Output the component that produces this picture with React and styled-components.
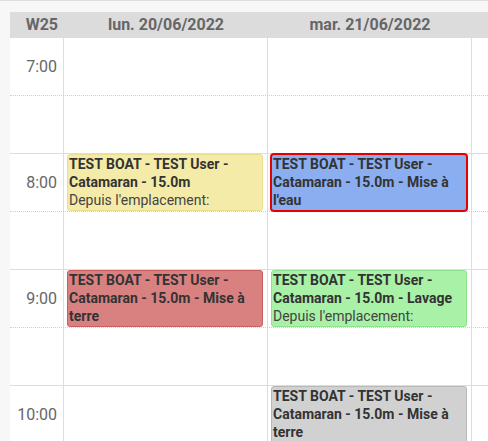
import React from 'react';
import styled, { createGlobalStyle, css } from 'styled-components';

const GlobalStyle = createGlobalStyle`
  html, body {
    margin: 0;
    padding: 0;
    overflow: hidden;
    background: #f7f7f7;
    font-family: Roboto, 'Liberation Sans', sans-serif;
  }
`;

const week = 'W25';
// third column is only partly in view, its heading sits outside the frame
const days = ['lun. 20/06/2022', 'mar. 21/06/2022', ''];
const hours = ['7:00', '8:00', '9:00', '10:00'];

const TITLE = 'TEST BOAT - TEST User - Catamaran - 15.0m';

const events = [
  { day: 0, hour: 1, kind: 'yellow', title: TITLE, detail: "Depuis l'emplacement:" },
  { day: 1, hour: 1, kind: 'blue', selected: true, title: `${TITLE} - Mise à l'eau` },
  { day: 0, hour: 2, kind: 'red', title: `${TITLE} - Mise à terre` },
  { day: 1, hour: 2, kind: 'green', title: `${TITLE} - Lavage`, detail: "Depuis l'emplacement:" },
  { day: 1, hour: 3, kind: 'gray', title: `${TITLE} - Mise à terre` },
];

const palette = {
  yellow: { bg: '#f4eba8', border: '#e9df8e' },
  blue: { bg: '#8aaef0', border: '#e50000' },
  red: { bg: '#d98181', border: '#c95f5f' },
  green: { bg: '#a8f1a6', border: '#8ee28c' },
  gray: { bg: '#d1d1d1', border: '#b8b8b8' },
};

const Calendar = () => {
  const findEvent = (hour, day) => events.find((e) => e.hour === hour && e.day === day);

  return (
    <Page>
      <GlobalStyle />
      <Table>
        <HeaderRow>
          <WeekCell>{week}</WeekCell>
          {days.map((d, di) => (
            <DayHeader key={di}>{d}</DayHeader>
          ))}
        </HeaderRow>
        {hours.map((h, hi) => (
          <React.Fragment key={h}>
            <SlotRow $dotted>
              <TimeCell>{h}</TimeCell>
              {days.map((d, di) => {
                const ev = findEvent(hi, di);
                return (
                  <DayCell key={di}>
                    {ev && (
                      <Event $kind={ev.kind} $selected={ev.selected}>
                        <Title>{ev.title}</Title>
                        {ev.detail && <Detail>{ev.detail}</Detail>}
                      </Event>
                    )}
                  </DayCell>
                );
              })}
            </SlotRow>
            <SlotRow>
              <TimeCell />
              {days.map((d, di) => (
                <DayCell key={di} />
              ))}
            </SlotRow>
          </React.Fragment>
        ))}
      </Table>
    </Page>
  );
};

const Page = styled.div`
  border-top: 1px solid #dedede;
  padding: 11px 0 0 10px;
  min-height: 100vh;
  box-sizing: border-box;
`;
const Table = styled.div`
  width: 666px;
  background: #fff;
`;
const columns = css`
  display: grid;
  grid-template-columns: 54px repeat(3, 204px);
`;
const HeaderRow = styled.div`
  ${columns};
  height: 26px;
  background: #dcdcdc;
  color: #666;
  font-size: 16px;
  font-weight: bold;
  line-height: 25px;
`;
const WeekCell = styled.div`
  text-align: right;
  padding-right: 6px;
`;
const DayHeader = styled.div`
  text-align: center;
`;
const SlotRow = styled.div`
  ${columns};
  height: 58px;
  box-sizing: border-box;
  border-bottom: 1px ${(p) => (p.$dotted ? 'dotted #cfcfcf' : 'solid #dddddd')};
`;
const TimeCell = styled.div`
  display: flex;
  align-items: center;
  justify-content: flex-end;
  padding-right: 6px;
  border-right: 1px solid #dddddd;
  color: #666;
  font-size: 16px;
`;
const DayCell = styled.div`
  border-right: 1px solid #dddddd;
  padding: 0 4px 0 3px;
  position: relative;
  min-width: 0;
`;
const Event = styled.div`
  height: 100%;
  box-sizing: border-box;
  padding: 0 1px;
  background: ${(p) => palette[p.$kind].bg};
  border: 1px solid ${(p) => palette[p.$kind].border};
  border-radius: 3px;
  box-shadow: ${(p) => (p.$selected ? `0 0 0 1px ${palette[p.$kind].border}` : 'none')};
  color: #333;
  font-size: 14px;
  line-height: 18px;
  position: relative;
  z-index: 1;
`;
const Title = styled.div`
  font-weight: bold;
`;
const Detail = styled.div`
  font-weight: normal;
  color: #444;
`;

export default Calendar;
